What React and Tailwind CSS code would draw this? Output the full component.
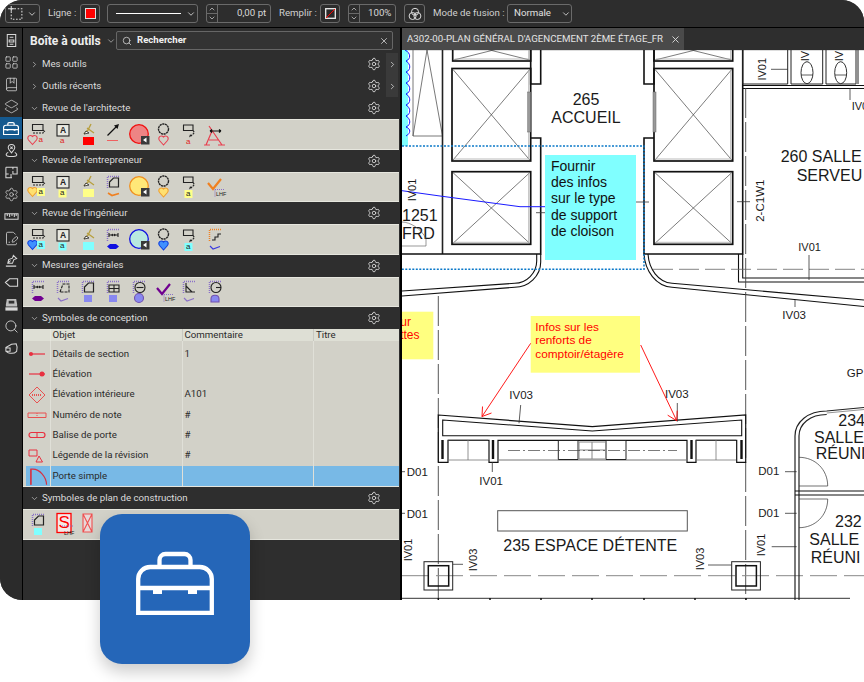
import { ChevronDown, ChevronRight, ChevronUp, Search, X, Settings, LayoutGrid, BookMarked, Layers2, FilePenLine } from 'lucide-react';

const ToolboxGlyph = ({ className, sw = 4.3 }) => (
    <svg viewBox="0 0 78 64" className={className} fill="none" stroke="currentColor" strokeWidth={sw}>
        <path d="M2.2 61.8V28a12 12 0 0 1 12-12h49.6a12 12 0 0 1 12 12v33.8Z" />
        <path d="M23.5 16V9a6 6 0 0 1 6-6h19a6 6 0 0 1 6 6v7" />
        <path d="M2.2 37h73.6" />
        <path d="M17 37h9v6h-9zM52 37h9v6h-9z" fill="currentColor" stroke="none" />
    </svg>
);

const Side = ({ d }) => (
    <svg viewBox="0 0 16 16" className="w-[15px] h-[15px]" fill="none" stroke="#d8d8d8" strokeWidth="1.1">
        <path d={d} />
    </svg>
);

// barre verticale de gauche
const sideIcons = [
    <Side d="M3.5 1.5h9v13h-9zM6 4.5h4M5.5 7.5h5v2h-5zM6 12h4" />,
    <LayoutGrid size={15} strokeWidth={1.2} color="#d8d8d8" />,
    <BookMarked size={15} strokeWidth={1.2} color="#d8d8d8" />,
    <Layers2 size={15} strokeWidth={1.2} color="#d8d8d8" />,
    <ToolboxGlyph className="w-[16px] h-[13px] text-white" sw={6} />,
    <Side d="M8 10.5C6 8 4.5 6.5 4.5 5a3.5 3.5 0 0 1 7 0c0 1.5-1.5 3-3.5 5.5ZM6.8 3.8l2.4 2.4M9.2 3.8 6.8 6.2M4.5 10C2.5 11 2 12 2.5 13s2.5 1.5 5.5 1.5 5-.5 5.500-1.500-.5-2-2-3" />,
    <Side d="M2 2.5h12v7H9.5v-3M9.5 2.5V4.5M2 2.5v11h5.5v-4M2 9.5h3M7.5 13.5h1" />,
    <Settings size={15} strokeWidth={1.2} color="#d8d8d8" />,
    <Side d="M1 5h14v6H1zM3.5 5v2.500M6 5v3.500M8.500 5v2.500M11 5v3.500M13 5v2.500" />,
    <FilePenLine size={15} strokeWidth={1.3} color="#d8d8d8" />,
    <Side d="M4 11l1-4 4-1.5L10 2.5l3.5 3.5-3 1L9 11zM2 14h11M4 11l3-3" />,
    <Side d="M1.5 8 6 4h8.5v8H6Z" />,
    <svg viewBox="0 0 16 16" className="w-[15px] h-[15px]"><path d="M3 2h10l1 6v2H2V8Z" fill="#bdbdbd" /><path d="M5 4h6v3H5z" fill="#333" /><path d="M1.5 11h13v3.500h-13z" fill="#d8d8d8" /></svg>,
    <Search size={15} strokeWidth={1.3} color="#e0e0e0" />,
    <Side d="M2 7 8 3.5 13 3c1 2 1.5 5 .5 8-2 2-6 2.500-9 1.500L2 11ZM2 7.500h4.500V11H2" />,
];

const Btn = ({ className = '', children }) => (
    <div className={`h-[19px] shrink-0 flex items-center border border-[#6a6a6a] rounded-[3px] ${className}`}>{children}</div>
);

const Spin = ({ className, value, textClass }) => (
    <Btn className={className}>
        <div className="w-[11px] h-full flex flex-col border-r border-[#6a6a6a]">
            <div className="h-1/2 flex items-center justify-center border-b border-[#6a6a6a]"><ChevronUp size={8} color="#ddd" /></div>
            <div className="h-1/2 flex items-center justify-center"><ChevronDown size={8} color="#ddd" /></div>
        </div>
        <span className={`text-[9.7px] text-[#d8d8d8] whitespace-nowrap ${textClass}`}>{value}</span>
    </Btn>
);

const Label = ({ className, children }) => (
    <span className={`shrink-0 text-[9.7px] text-[#d0d0d0] whitespace-nowrap ${className}`}>{children}</span>
);

const Toolbar = () => (
    <div className="h-[28px] shrink-0 flex items-center pl-[5px] bg-[#2d2d2d] border-b border-black">
        <Btn className="w-[35px] pl-[1px]">
            <svg viewBox="0 0 16 15" className="w-[17px] h-[16px]" fill="none" stroke="#ddd">
                <path d="M4 2.5h10v10H4z" strokeDasharray="1.5 1.5" />
                <path d="M4 0v5M1 2.5h6" />
            </svg>
            <ChevronDown size={10} color="#ddd" className="ml-[3px]" />
        </Btn>
        <Label className="ml-[8px] w-[28px]">Ligne :</Label>
        <Btn className="ml-[4px] w-[20px] justify-center"><div className="w-[11px] h-[11px] bg-[#ff0000] border border-[#ddd]" /></Btn>
        <Btn className="ml-[7px] w-[91px] pl-[8px]">
            <div className="w-[65px] h-[1.5px] bg-white" />
            <ChevronDown size={10} color="#ddd" className="ml-[5px]" />
        </Btn>
        <Spin className="ml-[8px] w-[65px]" value="0,00 pt" textClass="ml-[19px]" />
        <Label className="ml-[8px] w-[37px]">Remplir :</Label>
        <Btn className="ml-[4px] w-[20px] justify-center">
            <svg viewBox="0 0 11 11" className="w-[11px] h-[11px]"><rect x="0.7" y="0.7" width="9.6" height="9.6" fill="#2a2a2a" stroke="#eee" strokeWidth="1.3" /><path d="M1 10 10 1" stroke="#f00" /></svg>
        </Btn>
        <Spin className="ml-[8px] w-[48px]" value="100%" textClass="ml-[8px]" />
        <Btn className="ml-[8px] w-[21px] justify-center">
            <svg viewBox="0 0 14 14" className="w-[14px] h-[14px]" fill="none" stroke="#ddd"><circle cx="7" cy="4.8" r="3.5" /><circle cx="4.6" cy="9" r="3.5" /><circle cx="9.4" cy="9" r="3.5" /></svg>
        </Btn>
        <Label className="ml-[8px] w-[71px]">Mode de fusion :</Label>
        <Btn className="ml-[3px] w-[65px] pl-[6px]">
            <span className="w-[42px] text-[9.7px] text-[#e0e0e0]">Normale</span>
            <ChevronDown size={10} color="#ddd" className="ml-[6px]" />
        </Btn>
    </div>
);

// icônes de la boîte à outils
const Heart = ({ x = 0, y = 0, c }) => (
    <path transform={`translate(${x} ${y})`} d="M5.5 10 1.5 5.5C0 3.5 1 1 3.5 1c1 0 1.5.5 2 1 .5-.5 1-1 2-1C10 1 11 3.5 9.5 5.5Z" fill={c.fill} stroke={c.stroke} />
);

const Tiny = ({ x, y, c }) => (
    <>
        {c.bg && <rect x={x - 1.5} y={y - 6} width="8" height="8" fill={c.bg} />}
        <text x={x} y={y} fontSize="8" fill={c.bg ? '#222' : '#e02020'} fontFamily="Liberation Sans">a</text>
    </>
);

const Callout = ({ c }) => (
    <>
        <path d="M7.5 4.5H18v6H7.500z" fill="none" stroke="#222" />
        <path d="M8 13h10l1.500-1.500L18 10" fill="none" stroke="#222" strokeDasharray="2 1" />
        <Heart x={2} y={14.5} c={c} />
        <Tiny x={13.5} y={22} c={c} />
    </>
);
const Note = ({ c }) => (
    <>
        <rect x="7" y="4.500" width="12" height="11.500" fill="#e8e8e0" stroke="#222" />
        <text x="13" y="13.500" fontSize="8.500" fontWeight="bold" textAnchor="middle" fill="#222" fontFamily="Liberation Sans">A</text>
        <Tiny x={10} y={23.5} c={c} />
    </>
);
const Marker = ({ c }) => (
    <>
        <path d="M9 14l4-4 3-6M12 8l7 5" fill="none" stroke="#b8a040" strokeWidth="1.4" />
        <path d="M9 14l2-3 3 2z" fill="#fff" stroke="#222" strokeWidth="0.8" />
        <rect x="8" y="17" width="11" height="8" fill={c.swatch} />
    </>
);
const Arrow = () => (
    <>
        <path d="M7.5 15.500 17 6" stroke="#111" strokeWidth="1.300" />
        <path d="M19 4l-5 1.500 3.500 3.500z" fill="#111" />
        <path d="M7 20.500h11" stroke="#ef6060" />
    </>
);
const Disc = ({ c }) => (
    <>
        <circle cx="13" cy="14" r="9.300" fill={c.disc} stroke={c.ring} strokeWidth="1.300" />
        <rect x="15" y="16" width="8.500" height="8.500" fill="#3a3a3a" />
        <path d="M17 20l3.500-2.500v5z" fill="#fff" />
    </>
);
const Cloud = ({ c }) => (
    <>
        <circle cx="12.500" cy="9" r="5" fill="none" stroke="#222" strokeWidth="1.400" strokeDasharray="2.200 0.500" />
        <Heart x={7} y={15} c={c} />
    </>
);
const Pointer = ({ c }) => (
    <>
        <path d="M7.500 5h9.500v5.500H7.500z" fill="none" stroke="#222" />
        <path d="M17 10.500l1.500 2-4 4" fill="none" stroke="#222" strokeDasharray="2 1" />
        <path d="M16 15l-3 2.500 1-3z" fill="#222" />
        <Tiny x={10} y={24} c={c} />
    </>
);
const Dim = () => (
    <>
        <path d="M7 6 20 25M4 25l6-14M7 20h10M2 25h6M16 25h7" fill="none" stroke="#e84050" strokeWidth="1.200" />
        <path d="M8 11h11M8 11l2-1.500M8 11l2 1.500M19 11l-2-1.500M19 11l-2 1.500" fill="none" stroke="#111" strokeWidth="1.200" />
    </>
);
const Dotted = ({ col = '#8a70c8' }) => <path d="M7.500 16V4.500H19" fill="none" stroke={col} strokeWidth="1.500" strokeDasharray="1 1" />;
const Area = ({ c }) => (
    <>
        <Dotted />
        <path d="M9.500 15V10l4-4h5v9z" fill="none" stroke="#222" strokeWidth="1.200" />
        {c.under === 'check'
            ? <path d="M8 21l4 2.500 7-2" fill="none" stroke="#f08020" strokeWidth="1.700" />
            : <rect x="9" y="18" width="8" height="7" fill={c.swatch} />}
    </>
);
const Length = ({ c }) => (
    <>
        <Dotted />
        <path d="M9 10h9M9 8v4M18 8v4" fill="none" stroke="#222" />
        <path d="M11 10l2-1.500v3zM16 10l-2-1.500v3z" fill="#222" />
        <path d="M7 21.500l3-2.500h6l3 2.500-3 2.500h-6z" fill={c.solid} />
    </>
);
const Check = ({ col }) => (
    <>
        <path d="M6 11l5 6 8-10" fill="none" stroke={col} strokeWidth="2.200" />
        <path d="M13 17.500h10M13 17.500V25" fill="none" stroke="#8a70c8" strokeDasharray="1 1" />
        <text x="14" y="24" fontSize="5.500" fill="#222" fontFamily="Liberation Sans">LHF</text>
    </>
);
const Stair = () => (
    <>
        <Dotted col="#f08020" />
        <path d="M10 15h3v-3h3V9h3" fill="none" stroke="#222" />
        <path d="M8 21l3 3 7-2.500" fill="none" stroke="#3a3ae0" />
    </>
);
const Box3d = () => (
    <>
        <Dotted />
        <path d="M9 8h10v7H9zM9 11.500h10M14 8v7" fill="none" stroke="#222" />
        <rect x="9" y="18" width="8" height="7" fill="#8888f0" />
    </>
);
const CircleDim = () => (
    <>
        <Dotted />
        <circle cx="14" cy="10.500" r="5" fill="none" stroke="#222" />
        <path d="M10.500 10.500h7" stroke="#222" />
        <circle cx="13" cy="21" r="4.500" fill="#8888f0" stroke="#7050b0" />
    </>
);
const Angle = () => (
    <>
        <Dotted />
        <path d="M10 6v9h9M10 9l6 6" fill="none" stroke="#222" />
        <path d="M8 21l3 3 7-2.500" fill="none" stroke="#8a70c8" />
    </>
);
const Radius = () => (
    <>
        <Dotted />
        <circle cx="14" cy="10.500" r="5" fill="none" stroke="#222" />
        <path d="M14 10.500h5" stroke="#222" />
        <path d="M9 25v-3c0-5 8-5 8 0v3z" fill="#8888f0" stroke="#7050b0" />
    </>
);
const Poly = () => (
    <>
        <Dotted />
        <path d="M10 15l3-8h6v8z" fill="none" stroke="#222" strokeDasharray="3 1" />
        <path d="M8 21l3 3 7-2.500" fill="none" stroke="#8a70c8" />
    </>
);
const Sign = () => (
    <>
        <rect x="7" y="3.500" width="14" height="19" fill="#f4e8e8" stroke="#f00" strokeWidth="1.300" />
        <text x="8.500" y="18" fontSize="17" fill="#f00" fontFamily="Liberation Sans">S</text>
        <path d="M12 16h12" stroke="#8a70c8" strokeDasharray="1 1" />
        <text x="14" y="25" fontSize="5.500" fill="#222" fontFamily="Liberation Sans">LHF</text>
    </>
);
const Crossed = () => <path d="M8 4h9v18H8zM8 4l9 18M17 4 8 22" fill="#e8d8d8" stroke="#f05050" />;

const Tool = ({ children }) => (
    <svg viewBox="0 0 25.3 29" className="w-[25.3px] h-[29px] shrink-0" strokeWidth="1.100">{children}</svg>
);

const red = { fill: 'none', stroke: '#e84050', swatch: '#ff0000', disc: '#ee8484', ring: '#f01010', under: 'check' };
const yellow = { fill: '#ffe070', stroke: '#f0a030', bg: '#ffff88', swatch: '#ffff88', disc: '#ffe878', ring: '#f09020', under: 'check' };
const blue = { fill: '#4090ff', stroke: '#1040e0', bg: '#80ffff', swatch: '#80ffff', disc: '#b8e8e0', ring: '#1010e0', solid: '#1010e0' };
const purple = { solid: '#700090', swatch: '#8888f0' };

const Band = ({ children }) => (
    <div className="h-[30.5px] shrink-0 mr-[1.5px] flex items-center pl-[1.5px] bg-[#d2d1c8] border-y border-[#e6e6de]">
        {children.map((c, i) => <Tool key={i}>{c}</Tool>)}
    </div>
);

const Header = ({ label, open = true, extra = false }) => (
    <div className="h-[22px] shrink-0 flex items-center text-[9.7px] text-[#dcdcdc]">
        <div className="w-[19px] pl-[4px] flex justify-center">
            {open ? <ChevronDown size={9} color="#bbb" /> : <ChevronRight size={9} color="#bbb" />}
        </div>
        <span>{label}</span>
        <div className="ml-auto flex items-center">
            <Settings size={14} strokeWidth={1.3} color="#eeeeee" />
            <div className={`w-[12px] h-[22px] ml-[5px] mr-[2px] flex items-center justify-center ${extra ? 'bg-[#3a3a3a]' : ''}`}>
                {extra && <ChevronRight size={9} color="#ddd" />}
            </div>
        </div>
    </div>
);

const symbols = [
    ['Détails de section', '1', <path d="M5 9h16" stroke="#e83040" strokeWidth="1.2" />, <circle cx="7" cy="9" r="2" fill="#e83040" />],
    ['Élévation', '', <path d="M5 9h16" stroke="#e83040" strokeWidth="1.2" />, <circle cx="18" cy="9" r="2.5" fill="#e83040" />],
    ['Élévation intérieure', 'A101', <path d="M13 1l8 8-8 8-8-8z" fill="none" stroke="#e85050" />, <path d="M8 9h10" stroke="#e85050" strokeWidth="2" strokeDasharray="1 1" />],
    ['Numéro de note', '#', <path d="M4 7h18v4.5H4z" fill="none" stroke="#e85050" />, <path d="M13 7v4.5" stroke="#e85050" strokeDasharray="1 1" />],
    ['Balise de porte', '#', <rect x="5" y="6.5" width="16" height="5" rx="2.5" fill="none" stroke="#e83040" strokeWidth="1.2" />, <path d="M13 6.5v5" stroke="#e83040" />],
    ['Légende de la révision', '#', <path d="M5 3h8v6H5z" fill="none" stroke="#e83040" />, <path d="M15 9l3.5 6H12z" fill="none" stroke="#e83040" />],
    ['Porte simple', '', <path d="M5 18V2h2c7 0 14 8 14 16" fill="none" stroke="#d83040" strokeWidth="1.2" />, <path d="M5 2v16" stroke="#d83040" strokeWidth="1.2" />],
];

const SymbolTable = () => (
    <div className="h-[158px] shrink-0 mr-[1.5px] bg-[#d2d1c8] flex flex-col text-[9.7px] text-[#2a2a2a] border-b border-[#e6e6de]">
        <div className="h-[11.5px] shrink-0 grid grid-cols-[27.5px_132px_131.5px_1fr] bg-[#dedfd5] leading-[11.5px]">
            <div className="border-r border-[#e6e6de]" />
            <div className="pl-[2px] border-r border-[#c8c8c0]">Objet</div>
            <div className="pl-[2px] border-r border-[#c8c8c0]">Commentaire</div>
            <div className="pl-[2px]">Titre</div>
        </div>
        <div className="h-[3.5px] shrink-0 grid grid-cols-[27.5px_132px_131.5px_1fr]">
            <div className="border-r border-[#e0e0d8]" /><div className="border-r border-[#e0e0d8]" /><div className="border-r border-[#e0e0d8]" />
        </div>
        {symbols.map(([name, comment, a, b]) => {
            const sel = name === 'Porte simple';
            const cell = `flex items-center pl-[2px] border-r border-[#e0e0d8] ${sel ? 'bg-[#78b9e6]' : ''}`;
            return (
                <div key={name} className="h-[20.3px] shrink-0 grid grid-cols-[27.5px_132px_131.5px_1fr]">
                    <div className={`${cell} ml-[3px] !pl-0`}>
                        <svg viewBox="0 0 24 18" className={sel ? 'w-[24px] h-[18px]' : 'w-[24px] h-[18px] -ml-[2px]'}>{a}{b}</svg>
                    </div>
                    <div className={cell}>{name}</div>
                    <div className={cell}>{comment}</div>
                    <div className={`flex items-center ${sel ? 'bg-[#78b9e6]' : ''}`} />
                </div>
            );
        })}
    </div>
);

const ToolboxPanel = () => (
    <div className="w-[377px] shrink-0 bg-[#2e2e2e] flex flex-col">
        <div className="h-[25px] shrink-0 flex items-center pl-[7px]">
            <span className="text-[12px] font-bold text-[#eeeeee] w-[76px] whitespace-nowrap">Boîte à outils</span>
            <ChevronDown size={10} color="#aaa" />
            <div className="w-[277px] h-[19px] flex items-center border border-[#666] rounded-[2px] bg-[#333] pl-[4px]">
                <Search size={10} color="#ccc" className="ml-[1px]" />
                <span className="ml-[5px] text-[9.6px] font-bold text-[#f0f0f0]">Rechercher</span>
                <X size={10} color="#ccc" className="ml-auto mr-[3px]" />
            </div>
        </div>
        <Header label="Mes outils" open={false} extra />
        <Header label="Outils récents" open={false} extra />
        <Header label="Revue de l'architecte" />
        <Band>{[<Callout c={red} />, <Note c={red} />, <Marker c={red} />, <Arrow />, <Disc c={red} />, <Cloud c={red} />, <Pointer c={red} />, <Dim />]}</Band>
        <Header label="Revue de l'entrepreneur" />
        <Band>{[<Callout c={yellow} />, <Note c={yellow} />, <Marker c={yellow} />, <Area c={{ under: 'check' }} />, <Disc c={yellow} />, <Cloud c={yellow} />, <Pointer c={yellow} />, <Check col="#f08020" />]}</Band>
        <Header label="Revue de l'ingénieur" />
        <Band>{[<Callout c={blue} />, <Note c={blue} />, <Marker c={blue} />, <Length c={blue} />, <Disc c={blue} />, <Cloud c={blue} />, <Pointer c={blue} />, <Stair />]}</Band>
        <Header label="Mesures générales" />
        <Band>{[<Length c={purple} />, <Poly />, <Area c={{ swatch: '#8888f0' }} />, <Box3d />, <CircleDim />, <Check col="#700090" />, <Angle />, <Radius />]}</Band>
        <Header label="Symboles de conception" />
        <SymbolTable />
        <Header label="Symboles de plan de construction" />
        <Band>{[<Area c={{ swatch: '#80ffff' }} />, <Sign />, <Crossed />]}</Band>
    </div>
);

const T = ({ x, y, s = 16, c = '#1a1a1a', a, children }) => (
    <text x={x} y={y} fontSize={s} fill={c} textAnchor={a}>{children}</text>
);
const V = ({ x, y, s = 11, children }) => (
    <text transform={`translate(${x} ${y}) rotate(-90)`} fontSize={s} fill="#1a1a1a" textAnchor="middle">{children}</text>
);

const Elevator = ({ x, y, w, h }) => (
    <>
        <rect x={x} y={y} width={w} height={h} fill="none" stroke="#111" strokeWidth="1.7" />
        <path d={`M${x + 1} ${y + 1}L${x + w - 1} ${y + h - 1}M${x + w - 1} ${y + 1}L${x + 1} ${y + h - 1}`} stroke="#444" strokeWidth="0.7" />
        <path d={`M${x + 2} ${y + h - 2}H${x + w - 2}V${y + 2}`} fill="none" stroke="#aaa" strokeWidth="0.8" />
    </>
);

const Column = ({ x }) => (
    <>
        <rect x={x} y="561.7" width="28.7" height="28.3" fill="none" stroke="#222" />
        <rect x={x + 4.3} y="565.7" width="20.4" height="20.3" fill="none" stroke="#111" strokeWidth="1.5" />
    </>
);

// plan d'étage, mêmes coordonnées que la capture
const Plan = () => (
    <svg viewBox="402 50 462 550" className="block w-[462px] h-[550px] bg-white" fontFamily="'Liberation Sans', sans-serif">
        <path d="M402 50h462" stroke="#bbb" />
        {/* nuage bleu */}
        <rect x="402" y="50" width="6" height="96" fill="#7fffff" />
        <path d="M405 50c6 3 6 9 1 11 5 3 5 9 0 11 5 3 5 9 0 11 5 3 5 9 0 11 5 3 5 9 0 11 5 3 5 9 0 11 5 3 5 9 0 11 5 2 5 6 0 9" fill="none" stroke="#1515ff" strokeWidth="1" />

        {/* murs gauche */}
        <path d="M413 50v86h29.5V50M427 50l-14 86M427 50l15.5 86" fill="none" stroke="#555" strokeWidth="0.8" />
        <path d="M442.5 50v204" stroke="#222" strokeWidth="1.6" />
        <Elevator x={452.7} y={40} w={78} h={21} />
        <Elevator x={452} y={68.5} w={78.7} h={92.5} />
        <Elevator x={452} y={171.7} w={78.7} h={72.6} />
        <path d="M530.7 50v34h10V50M530.7 138h10v116H402" fill="none" stroke="#111" strokeWidth="1.6" />
        <rect x="527.7" y="92" width="3" height="40" fill="#999" stroke="#666" strokeWidth="0.5" />
        <path d="M540.7 254v8c0 14-12 25-26 25.3L402 296M536.7 254v7c0 12-10 22-22 22.3L402 291" fill="none" stroke="#111" strokeWidth="1.1" />

        {/* murs droite */}
        <Elevator x={654} y={40} w={78.7} h={21} />
        <Elevator x={654} y={68.5} w={78.7} h={92.5} />
        <Elevator x={654} y={171.7} w={78.7} h={72.6} />
        <path d="M654 50v34h-10V50M654 138h-10v116h98.7V50" fill="none" stroke="#111" strokeWidth="1.6" />
        <rect x="653" y="92" width="3" height="40" fill="#999" stroke="#666" strokeWidth="0.5" />
        <path d="M644 254c1 17 12 32 28 33.3L864 306.5M648 254c1 15 10 28 24 29.3L864 300" fill="none" stroke="#111" strokeWidth="1.1" />
        <path d="M742.7 85.5H864M742.7 88.5H864" stroke="#111" strokeWidth="1.2" />
        <path d="M738.5 254v28H864M742.7 254v24H864" fill="none" stroke="#111" strokeWidth="1.1" />
        <path d="M742.7 50v34h45V50M791 50v34h31.7V50M826 50v34h30V50M858 50v34" fill="none" stroke="#222" strokeWidth="1" />
        <ellipse cx="807" cy="72.7" rx="6" ry="11" fill="none" stroke="#333" strokeWidth="1" />
        <ellipse cx="840.7" cy="72.7" rx="6" ry="11" fill="none" stroke="#333" strokeWidth="1" />
        <path d="M801 75h12M835 75h12" stroke="#333" strokeWidth="0.8" />

        {/* axes */}
        <path d="M438.3 296V600M745.7 88V600" stroke="#444" strokeWidth="0.9" strokeDasharray="30 4" />
        <path d="M653 269.3H864" stroke="#666" strokeWidth="0.8" strokeDasharray="20 6" />
        <path d="M402 575.7H864" stroke="#888" strokeWidth="1" strokeDasharray="27 7" />
        <path d="M402 598.3h448" stroke="#333" strokeWidth="1" />
        <path d="M438.3 598v2M490 598v2M541 598v2M592 598v2M644 598v2M695 598v2M746 598v2" stroke="#111" strokeWidth="1.5" />

        {/* zone pointillée */}
        <path d="M402 146h242v123.3H402" fill="none" stroke="#0a78c8" strokeWidth="1.5" strokeDasharray="2 1.5" />
        <path d="M402 190.7l38 5.3 80 10.7h25" fill="none" stroke="#1a1aff" strokeWidth="1" />
        <path d="M536 212.7h9M636 202h13M737 201.7h13M771 69.3h17M850 88v12M809 255v25" stroke="#333" strokeWidth="0.8" />

        <V x={416} y={190}>IV01</V>
        <T x={402} y={220.7}>1251</T>
        <T x={402} y={239}>FRD</T>
        <path d="M402 222c8 0 20 7 24 17v7h-24" fill="none" stroke="#555" strokeWidth="0.6" />

        <T x={586} y={105} a="middle">265</T>
        <T x={586} y={123} a="middle">ACCUEIL</T>
        <T x={780.7} y={161.7}>260 SALLE</T>
        <T x={796.7} y={180.7}>SERVEU</T>
        <V x={763.5} y={200.7} s={11.5}>2-C1W1</V>
        <V x={765.5} y={69.3}>IV01</V>
        <V x={809} y={56}>IV</V>
        <V x={843} y={56}>IV</V>
        <T x={798.3} y={250.7} s={11}>IV01</T>
        <T x={851.7} y={110} s={11}>IV0</T>

        {/* notes */}
        <rect x="545" y="155" width="91" height="105" fill="#80ffff" />
        {['Fournir', 'des infos', 'sur le type', 'de support', 'de cloison'].map((l, i) => (
            <T key={l} x={551} y={170.7 + i * 16.3} s={14} c="#111">{l}</T>
        ))}
        <rect x="402" y="311.7" width="31.3" height="47.6" fill="#ffff80" />
        <T x={411} y={326} s={12} c="#f00" a="end">ur</T>
        <T x={419.5} y={339} s={12} c="#f00" a="end">ttes</T>
        <rect x="530.7" y="316" width="109.3" height="56.7" fill="#ffff80" />
        {['Infos sur les', 'renforts de', 'comptoir/étagère'].map((l, i) => (
            <T key={l} x={535.3} y={330.7 + i * 13.7} s={11.8} c="#f00">{l}</T>
        ))}

        {/* comptoir */}
        <path d="M438.3 415l154 11.7 153.4-11.7v47.3h-9v-22H696v22h-9v-22H498v22h-9v-22H448v22h-9.7z" fill="none" stroke="#111" strokeWidth="1.2" />
        <path d="M442.7 420l149.6 11 149.400-11v15.700H442.700z" fill="none" stroke="#111" strokeWidth="1.100" />
        <path d="M442.500 440v19M493 440v19M691.500 440v19M741.500 440v19" stroke="#111" strokeWidth="2.400" />
        <path d="M448 440h40M448 460h40M468 440v20M696 440h40M696 460h40M716 440v20" stroke="#777" strokeWidth="0.800" fill="none" />
        <path d="M498 460h189" stroke="#777" strokeWidth="1" />
        <path d="M558.300 440.500H578v19h-19.700zM606 440.500h20v19h-20z" fill="none" stroke="#222" />
        <path d="M579 442h27v17h-27zM592 442v17M579 450h27" fill="none" stroke="#888" strokeWidth="1" />
        <path d="M508 450.500H677" stroke="#444" strokeWidth="0.700" strokeDasharray="12 3 2 3" />
        <path d="M520.700 405l-1.700 18.300M677.300 403v18.700M492.300 462v10M402 471.700h3M402 513.300h3M785 471.700h11.700M785 513.300h11.700" stroke="#333" strokeWidth="0.800" />

        {/* flèches rouges */}
        <path d="M530.700 343.300 482 416.500M482 416.500l9.500-3.500M482 416.500l0.500-10M640.700 345l36 75.700M676.700 420.700l-9-5.500M676.700 420.700l.5-10" fill="none" stroke="#f00" strokeWidth="0.900" />

        <T x={509.300} y={399.300} s={11.500}>IV03</T>
        <T x={665} y={398} s={11.500}>IV03</T>
        <T x={479.300} y={485.300} s={11.500}>IV01</T>
        <T x={406.700} y={475.700} s={11.500}>D01</T>
        <T x={406.700} y={517.700} s={11.500}>D01</T>
        <T x={758.300} y={475} s={11.500}>D01</T>
        <T x={758.300} y={516.700} s={11.500}>D01</T>
        <T x={782.300} y={319.300} s={11.500}>IV03</T>
        <T x={846.700} y={376.700} s={11.500}>GP</T>
        <path d="M795 300v7" stroke="#333" strokeWidth="0.800" />

        <rect x="497.700" y="510.700" width="189.600" height="20.300" fill="none" stroke="#555" />
        <T x={503.300} y={551} s={16}>235 ESPACE DÉTENTE</T>
        <Column x={424} />
        <Column x={731.700} />
        <V x={412} y={550}>IV01</V>
        <V x={477} y={560}>IV03</V>
        <V x={704} y={559}>IV03</V>
        <V x={764.500} y={545}>IV01</V>
        <path d="M452.700 564.300H463M708 565h23.700M771.700 546.700H796.700" stroke="#333" strokeWidth="0.800" />

        {/* salles de réunion */}
        <path d="M795 600V436c0-14 13-25 31.700-25L864 407.500M799 600V436c0-12 11-21.500 27.700-21.500" fill="none" stroke="#222" strokeWidth="1.200" />
        <path d="M826.700 413l37.300-3.500" stroke="#666" strokeWidth="0.700" />
        <path d="M799 457.300c16 0 28.700 12 28.700 28.700H799M799 527.700c16 0 28.700-12 28.700-28.700H799" fill="none" stroke="#333" strokeWidth="0.700" />
        <path d="M795 491h69M795 495h69" stroke="#111" strokeWidth="1.200" />
        <T x={838.300} y={426}>234</T>
        <T x={814} y={442.700}>SALLE</T>
        <T x={815.700} y={459.300}>RÉUNI</T>
        <T x={835} y={526.700}>232</T>
        <T x={809.300} y={545}>SALLE</T>
        <T x={810.700} y={563.300}>RÉUNI</T>
    </svg>
);

export default function App() {
    return (
        <div className="relative w-[864px] h-[682px] bg-white overflow-hidden font-['Roboto',sans-serif]">
            <div className="h-[600px] flex flex-col bg-[#2e2e2e] rounded-tl-[22px] rounded-tr-[22px] rounded-bl-[22px] overflow-hidden">
                <Toolbar />
                <div className="flex-1 flex min-h-0">
                    <div className="w-[22px] shrink-0 bg-[#2b2b2b] pt-[1px] flex flex-col">
                        {sideIcons.map((icon, i) => (
                            <div key={i} className={`h-[22px] shrink-0 flex items-center justify-center ${i === 4 ? 'bg-[#15598f]' : ''}`}>{icon}</div>
                        ))}
                    </div>
                    <div className="w-[1px] bg-black shrink-0" />
                    <ToolboxPanel />
                    <div className="w-[2px] bg-black shrink-0" />
                    <div className="flex-1 flex flex-col min-w-0">
                        <div className="h-[22px] shrink-0 flex bg-[#2e2e2e]">
                            <div className="w-[282px] flex items-center pl-[5px] bg-[#4a4a4a] text-[9.7px] text-[#e4e4e4] whitespace-nowrap">
                                A302-00-PLAN GÉNÉRAL D'AGENCEMENT 2ÈME ÉTAGE_FR
                                <X size={11} color="#ddd" className="ml-auto mr-[3px]" />
                            </div>
                        </div>
                        <Plan />
                    </div>
                </div>
            </div>
            <div className="absolute left-[100px] top-[514px] w-[150px] h-[150px] rounded-[22px] bg-[#2566b8] shadow-[0_8px_16px_rgba(0,0,0,0.2)] flex items-center justify-center">
                <ToolboxGlyph className="w-[78px] h-[64px] text-white -mt-[12px]" />
            </div>
        </div>
    );
}
